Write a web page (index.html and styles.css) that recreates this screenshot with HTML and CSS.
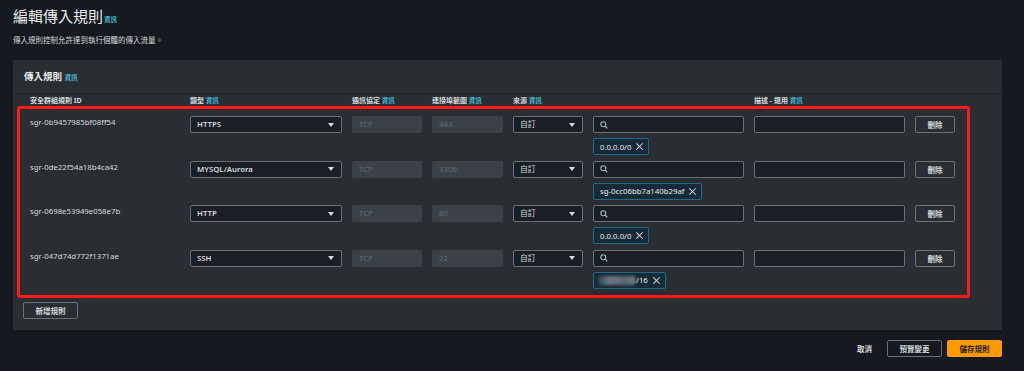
FILE: index.html
```html
<!DOCTYPE html>
<html lang="zh-Hant">
<head>
  <meta charset="UTF-8" />
  <title>編輯傳入規則</title>
  <link rel="stylesheet" href="styles.css">
</head>
<body>

<div class="page">
  <h1 class="title">編輯傳入規則<a class="info">資訊</a></h1>
  <p class="subtitle">傳入規則控制允許達到執行個體的傳入流量。</p>

  <section class="panel">
    <div class="panel-head">
      <h2>傳入規則 <a class="info">資訊</a></h2>
    </div>
    <div class="panel-body">
      <div class="grid col-heads">
        <div>安全群組規則 ID</div>
        <div>類型 <a class="info">資訊</a></div>
        <div>通訊協定 <a class="info">資訊</a></div>
        <div>連接埠範圍 <a class="info">資訊</a></div>
        <div>來源 <a class="info">資訊</a></div>
        <div></div>
        <div>描述 - 選用 <a class="info">資訊</a></div>
        <div></div>
      </div>

      <div class="rules">
        <div class="grid rule">
          <div class="rule-id">sgr-0b9457985bf08ff54</div>
          <div class="select bold">HTTPS<span class="caret"></span></div>
          <div class="field disabled">TCP</div>
          <div class="field disabled">443</div>
          <div class="select">自訂<span class="caret"></span></div>
          <div class="source">
            <div class="field search"><svg width="8" height="8" viewBox="0 0 8 8"><circle cx="3.3" cy="3.3" r="2.5" fill="none" stroke="#aab7b8" stroke-width="1.1"/><path d="M5.2 5.2 L7.4 7.4" stroke="#aab7b8" stroke-width="1.2"/></svg></div>
            <span class="token">0.0.0.0/0<span class="x"></span></span>
          </div>
          <div class="field"></div>
          <button class="btn">刪除</button>
        </div>

        <div class="grid rule">
          <div class="rule-id">sgr-0de22f54a18b4ca42</div>
          <div class="select bold">MYSQL/Aurora<span class="caret"></span></div>
          <div class="field disabled">TCP</div>
          <div class="field disabled">3306</div>
          <div class="select">自訂<span class="caret"></span></div>
          <div class="source">
            <div class="field search"><svg width="8" height="8" viewBox="0 0 8 8"><circle cx="3.3" cy="3.3" r="2.5" fill="none" stroke="#aab7b8" stroke-width="1.1"/><path d="M5.2 5.2 L7.4 7.4" stroke="#aab7b8" stroke-width="1.2"/></svg></div>
            <span class="token">sg-0cc06bb7a140b29af<span class="x"></span></span>
          </div>
          <div class="field"></div>
          <button class="btn">刪除</button>
        </div>

        <div class="grid rule">
          <div class="rule-id">sgr-0698e53949e058e7b</div>
          <div class="select bold">HTTP<span class="caret"></span></div>
          <div class="field disabled">TCP</div>
          <div class="field disabled">80</div>
          <div class="select">自訂<span class="caret"></span></div>
          <div class="source">
            <div class="field search"><svg width="8" height="8" viewBox="0 0 8 8"><circle cx="3.3" cy="3.3" r="2.5" fill="none" stroke="#aab7b8" stroke-width="1.1"/><path d="M5.2 5.2 L7.4 7.4" stroke="#aab7b8" stroke-width="1.2"/></svg></div>
            <span class="token">0.0.0.0/0<span class="x"></span></span>
          </div>
          <div class="field"></div>
          <button class="btn">刪除</button>
        </div>

        <div class="grid rule">
          <div class="rule-id">sgr-047d74d772f1371ae</div>
          <div class="select bold">SSH<span class="caret"></span></div>
          <div class="field disabled">TCP</div>
          <div class="field disabled">22</div>
          <div class="select">自訂<span class="caret"></span></div>
          <div class="source">
            <div class="field search"><svg width="8" height="8" viewBox="0 0 8 8"><circle cx="3.3" cy="3.3" r="2.5" fill="none" stroke="#aab7b8" stroke-width="1.1"/><path d="M5.2 5.2 L7.4 7.4" stroke="#aab7b8" stroke-width="1.2"/></svg></div>
            <span class="token"><span class="blur"></span>/16<span class="x"></span></span>
          </div>
          <div class="field"></div>
          <button class="btn">刪除</button>
        </div>
      </div>

      <button class="btn add">新增規則</button>
    </div>
  </section>

  <div class="actions">
    <span class="cancel">取消</span>
    <button class="btn wide">預覽變更</button>
    <button class="btn wide primary">儲存規則</button>
  </div>
</div>

</body>
</html>
```

FILE: styles.css
```css
body {
  margin: 0;
  background: #16191f;
  color: #d5dbdb;
  font-family: "Noto Sans", "Noto Sans CJK TC", sans-serif;
  height: 371px;
  overflow: hidden;
}
.page {
  padding: 6px 22px 0 13px;
}
.title {
  margin: 0;
  font-size: 15px;
  font-weight: 400;
  line-height: 20px;
  color: #e9ebed;
}
.info {
  color: #44b9d6;
  font-size: 6.5px;
  font-weight: 700;
}
.title .info {
  margin-left: 1px;
}
.subtitle {
  margin: 5px 0 0;
  font-size: 7.5px;
  line-height: 10px;
  color: #d5dbdb;
}
.panel {
  margin-top: 15px;
  background: #2a2e33;
}
.panel-head {
  height: 33px;
  padding-left: 11px;
  border-bottom: 1px solid #1f2227;
}
.panel-head h2 {
  margin: 0;
  font-size: 9.5px;
  line-height: 33px;
  font-weight: 700;
  color: #e9ebed;
}
.panel-body {
  padding: 0 4px 11px;
}
.grid {
  display: grid;
  grid-template-columns: 150px 152px 70px 71px 70px 151px 151px 40px;
  column-gap: 10px;
  align-items: start;
}
.col-heads {
  padding: 2px 0 0 13px;
  font-size: 7px;
  line-height: 10px;
  font-weight: 700;
  color: #d5dbdb;
}
.rules {
  width: fit-content;
  border: 3px solid #ff1a1a;
  border-radius: 3px;
  padding: 7px 12px 6px 10px;
  display: flex;
  flex-direction: column;
  gap: 5.5px;
}
.rule-id {
  font-size: 7.8px;
  line-height: 12px;
  padding-top: 0;
}
.select, .field {
  box-sizing: border-box;
  height: 17px;
  border: 1px solid #687078;
  border-radius: 2px;
  background: #1a1f27;
  font-size: 7.8px;
  line-height: 15px;
  padding-left: 6px;
  display: flex;
  align-items: center;
}
.select {
  justify-content: space-between;
  padding-right: 7px;
}
.bold {
  font-weight: 600;
}
.caret {
  width: 0;
  height: 0;
  border-left: 3px solid transparent;
  border-right: 3px solid transparent;
  border-top: 4px solid #d5dbdb;
}
.field.disabled {
  background: #3c4149;
  border-color: #3c4149;
  color: #5f6b7a;
}
.source {
  display: flex;
  flex-direction: column;
  align-items: flex-start;
  gap: 5px;
}
.search {
  width: 100%;
  padding-left: 6px;
}
.search svg {
  display: block;
}
.token {
  box-sizing: border-box;
  height: 17px;
  display: inline-flex;
  align-items: center;
  border: 1px solid #166e8c;
  border-radius: 2px;
  background: #172a37;
  padding: 0 5px 0 6px;
  font-size: 7.8px;
  color: #e9ebed;
}
.x {
  position: relative;
  width: 7px;
  height: 7px;
  margin-left: 5px;
}
.x::before, .x::after {
  content: "";
  position: absolute;
  left: 3px;
  top: -1px;
  width: 1.2px;
  height: 9px;
  background: #d5dbdb;
  transform: rotate(45deg);
}
.x::after {
  transform: rotate(-45deg);
}
.blur {
  width: 38px;
  height: 9px;
  margin-left: -2px;
  border-radius: 4px;
  background: linear-gradient(90deg, #2f4654, #6b7a84 30%, #59656e 70%, #6f7b84);
  filter: blur(1.5px);
}
.btn {
  box-sizing: border-box;
  height: 17px;
  border: 1px solid #687078;
  border-radius: 2px;
  background: transparent;
  color: #d5dbdb;
  font-family: inherit;
  font-size: 7.5px;
  font-weight: 700;
  padding: 0;
}
.add {
  width: 55px;
  margin: 4px 0 0 6px;
  display: block;
}
.actions {
  margin-top: 10px;
  display: flex;
  justify-content: flex-end;
  align-items: center;
  gap: 5px;
}
.cancel {
  font-size: 7.5px;
  font-weight: 700;
  margin-right: 10px;
}
.wide {
  width: 55px;
}
.primary {
  background: #ff9900;
  border-color: #ff9900;
  color: #16191f;
}
```
